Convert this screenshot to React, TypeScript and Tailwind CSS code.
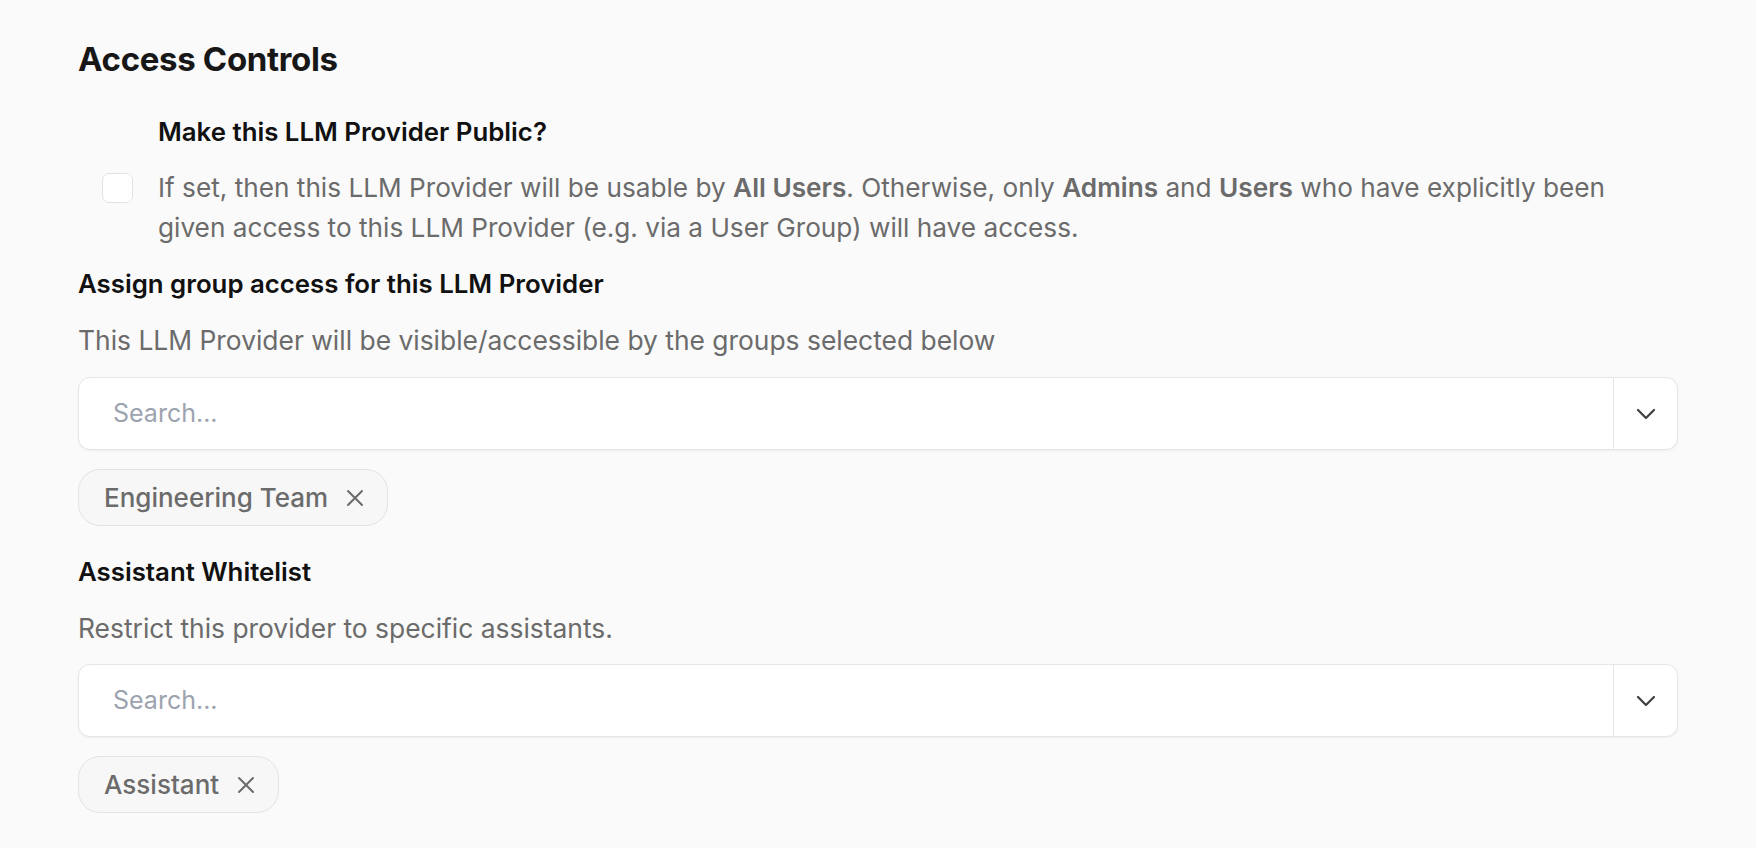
import React from "react";

function Chevron() {
  return (
    <svg width="20" height="12" viewBox="0 0 20 12" fill="none">
      <path d="M2 2l8 8 8-8" stroke="#3f3f3f" strokeWidth="2.2" strokeLinecap="round" strokeLinejoin="round" />
    </svg>
  );
}

function Cross() {
  return (
    <svg width="18" height="18" viewBox="0 0 18 18" fill="none">
      <path d="M2 2l14 14M16 2L2 16" stroke="#6b6b6b" strokeWidth="2" strokeLinecap="round" />
    </svg>
  );
}

function SearchSelect() {
  return (
    <div className="flex h-[73px] w-full items-stretch rounded-[12px] border-[1.5px] border-[#e6e6e6] bg-white shadow-[0_1px_2px_rgba(0,0,0,0.05)]">
      <div className="flex flex-1 items-center pl-[34px] text-[25px] text-[#9ca3af]">Search...</div>
      <div className="w-[1.5px] bg-[#e6e6e6]" />
      <div className="flex w-[63px] items-center justify-center">
        <Chevron />
      </div>
    </div>
  );
}

function Chip({ label }: { label: string }) {
  return (
    <div className="inline-flex h-[57px] items-center gap-[18px] rounded-[22px] border-[1.5px] border-[#e3e3e3] bg-[#f7f7f7] pl-[25px] pr-[23px] text-[26px] font-medium text-[#6b6b6b]">
      <span>{label}</span>
      <Cross />
    </div>
  );
}

export default function App() {
  return (
    <div className="min-h-screen bg-[#fafafa] px-[78px] pt-[41px] font-['Inter',sans-serif] antialiased">
      <h2 className="text-[33px] font-bold leading-[36px] tracking-[-0.01em] text-[#171717]">Access Controls</h2>

      <div className="mt-[39px]">
        <div className="pl-[80px] text-[25.8px] font-semibold leading-[32px] text-[#111111]">
          Make this LLM Provider Public?
        </div>
        <div className="mt-[20px] flex items-start">
          <div className="ml-[24px] mt-[5px] h-[30px] w-[31px] shrink-0 rounded-[7px] border-[1.5px] border-[#e3e3e3] bg-white" />
          <p className="ml-[25px] max-w-[1480px] text-[26.2px] leading-[40px] text-[#6b6b6b]">
            If set, then this LLM Provider will be usable by <b className="font-semibold">All Users</b>. Otherwise, only{" "}
            <b className="font-semibold">Admins</b> and <b className="font-semibold">Users</b> who have explicitly been
            given access to this LLM Provider (e.g. via a User Group) will have access.
          </p>
        </div>
      </div>

      <div className="mt-[20px] text-[25.8px] font-semibold leading-[32px] text-[#111111]">
        Assign group access for this LLM Provider
      </div>
      <div className="mt-[24px] text-[26.4px] leading-[32px] text-[#6b6b6b]">
        This LLM Provider will be visible/accessible by the groups selected below
      </div>
      <div className="mt-[21px]">
        <SearchSelect />
      </div>
      <div className="mt-[19px]">
        <Chip label="Engineering Team" />
      </div>

      <div className="mt-[30px] text-[25.8px] font-semibold leading-[32px] text-[#111111]">Assistant Whitelist</div>
      <div className="mt-[24px] text-[26.4px] leading-[32px] text-[#6b6b6b]">
        Restrict this provider to specific assistants.
      </div>
      <div className="mt-[20px]">
        <SearchSelect />
      </div>
      <div className="mt-[19px]">
        <Chip label="Assistant" />
      </div>
    </div>
  );
}
